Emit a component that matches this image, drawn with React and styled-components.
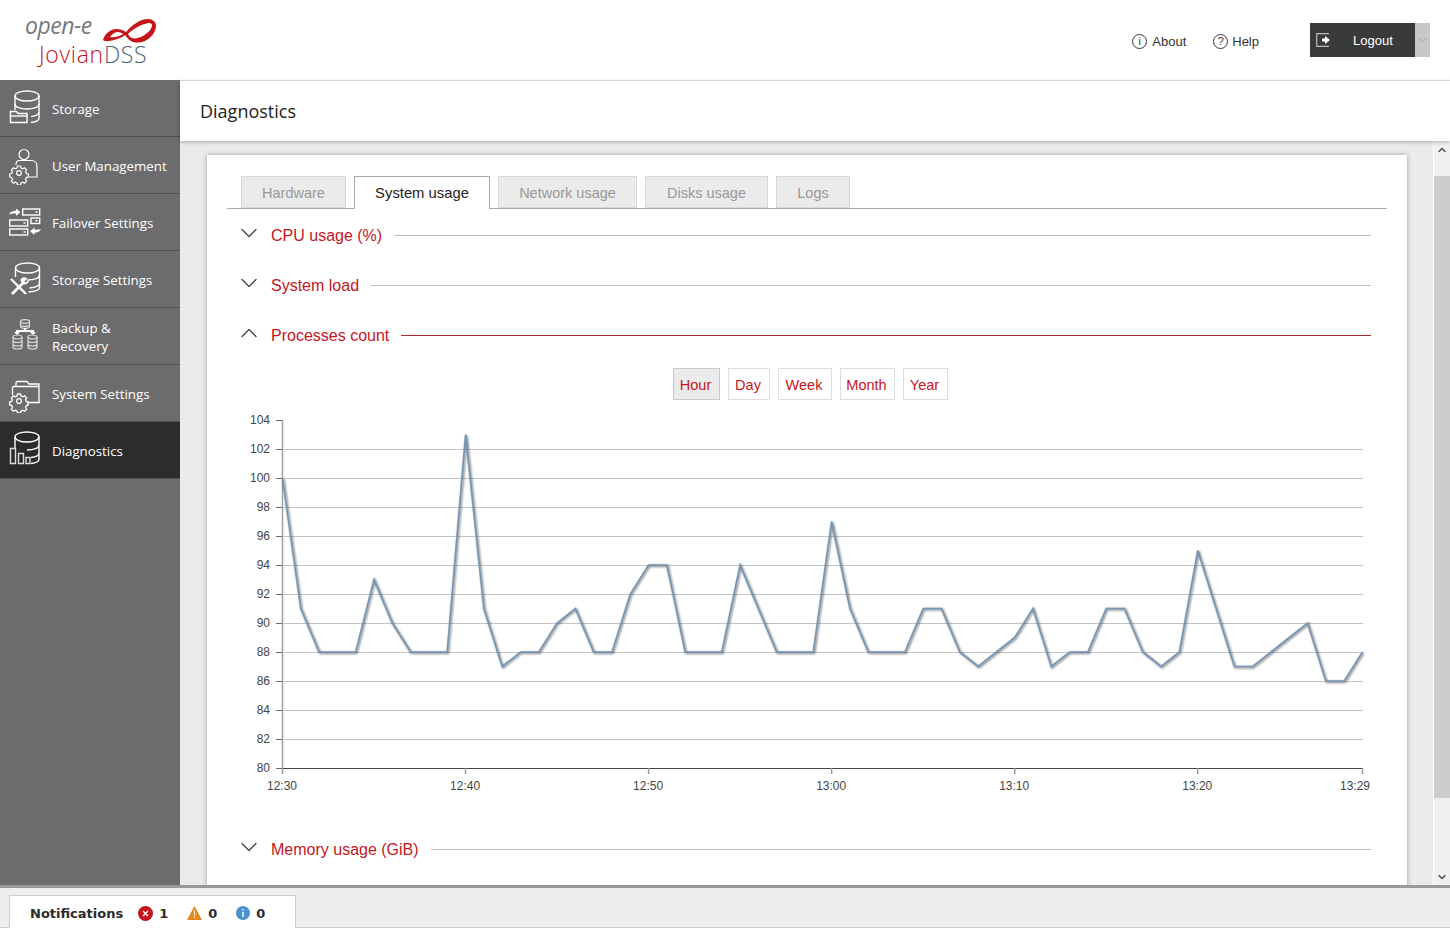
import React from "react";
import styled, { createGlobalStyle } from "styled-components";
import { ChevronDown, ChevronUp } from "lucide-react";

const GlobalStyle = createGlobalStyle`
    * { box-sizing: border-box; }
    html, body { margin: 0; padding: 0; background: #fff; }
    body { font-family: "Liberation Sans", Arial, sans-serif; }
`;

const StorageIcon = () => (
    <svg width="40" height="40" viewBox="0 0 40 40" fill="none" stroke="#fff" strokeWidth="1.400">
        <ellipse cx="21" cy="8" rx="12" ry="5" />
        <path d="M9 8v8c0 3 5 5 12 5s12-2 12-5V8" />
        <path d="M33 16v8c0 2.500-3 4-8 4.600" />
        <path d="M33 24v6c0 2.500-3 4-8 4.500" />
        <path d="M9 16v6" />
        <path d="M4.500 34.500V23.500h6l1.500 2h9v9z" fill="#6c6c6e" />
        <path d="M3.500 28h18" />
    </svg>
);

const GearShape = ({ x, y }) => (
    <g transform={`translate(${x} ${y})`}>
        <circle r="2.400" />
        <path d="M-1.500-7h3l.5 2 1.700.8 1.900-1 2 2.100-1 1.800.7 1.800 2 .5v3l-2 .5-.7 1.800 1 1.800-2 2.100-1.900-1-1.700.8-.5 2h-3l-.5-2-1.700-.8-1.900 1-2-2.100 1-1.800-.7-1.800-2-.5v-3l2-.5.7-1.800-1-1.800 2-2.100 1.900 1 1.700-.8z" />
    </g>
);

const UserIcon = () => (
    <svg width="40" height="40" viewBox="0 0 40 40" fill="none" stroke="#fff" strokeWidth="1.200">
        <circle cx="18" cy="9.500" r="5" />
        <path d="M10 20c0-2.500 1-4.500 3.500-4.500h12c3.500 0 5.500 2.500 5.500 5.500v11h-9" />
        <GearShape x={13} y={28} />
    </svg>
);

const FailoverIcon = () => (
    <svg width="40" height="40" viewBox="0 0 40 40" fill="none" stroke="#fff" strokeWidth="1.400">
        <rect x="16.700" y="7" width="17" height="6" />
        <rect x="25" y="16" width="8.700" height="5.500" />
        <rect x="3.700" y="18" width="18" height="6" />
        <rect x="3.700" y="27" width="18" height="6" />
        <path d="M29.500 10h2M29.500 18.700h2M17.500 21h2M17.500 30h2" strokeWidth="1.600" />
        <path d="M3 12.500c1-2.500 3.500-3.700 7-3.700V6.500l4.500 3.800-4.500 3.500v-2.300c-3 0-5 .2-7 1z" fill="#fff" stroke="none" />
        <path d="M35 27c-1 2.500-3.500 3.700-6.500 3.700v2.300L24 29.200l4.500-3.700v2.300c3 0 5-.2 6.500-.8z" fill="#fff" stroke="none" />
    </svg>
);

const StorageSettingsIcon = () => (
    <svg width="40" height="40" viewBox="0 0 40 40" fill="none" stroke="#fff" strokeWidth="1.400">
        <ellipse cx="21.500" cy="9" rx="12" ry="5" />
        <path d="M9.500 9v9M33.500 9v7c0 3-5 5-12 5" />
        <path d="M33.500 16v8c0 2.500-4 4.500-10 5" />
        <path d="M33.500 24v4.500c0 2.500-4 4-11 4.500" />
        <path d="M5 20l15 15M19 22L6 35" stroke="#6c6c6e" strokeWidth="6" />
        <path d="M5 20l15 15" strokeWidth="2.400" />
        <path d="M18 23L6 35" strokeWidth="2.800" />
        <path d="M21 19.500l-3 3 1.500 1.500 3-2.500c0 2-2 4-4.500 3.500l-3-3c-.5-2.500 2-4.500 6-2.500z" fill="#fff" strokeWidth="1" />
    </svg>
);

const SmallDb = ({ x, y }) => (
    <g transform={`translate(${x} ${y})`}>
        <ellipse cx="4.500" cy="2" rx="4.500" ry="2" />
        <path d="M0 2v10c0 1.200 2 2 4.500 2s4.500-.8 4.500-2V2M0 5.500c0 1.200 2 2 4.500 2s4.500-.8 4.500-2M0 9c0 1.200 2 2 4.500 2s4.500-.8 4.500-2" />
    </g>
);

const BackupIcon = () => (
    <svg width="40" height="40" viewBox="0 0 40 40" fill="none" stroke="#ddd" strokeWidth="1.200">
        <ellipse cx="19" cy="5.500" rx="4.500" ry="1.800" />
        <path d="M14.500 5.500v5c0 1 2 1.800 4.500 1.800s4.500-.8 4.500-1.800v-5M14.500 8.500c0 1 2 1.800 4.500 1.800s4.500-.8 4.500-1.800" />
        <path d="M11 18v-3h16v3M19 12v3" strokeWidth="2.200" stroke="#fff" />
        <path d="M8 16h6l-3 3zM24 16h6l-3 3z" fill="#fff" stroke="none" />
        <SmallDb x={7} y={19} />
        <SmallDb x={22} y={19} />
    </svg>
);

const SystemIcon = () => (
    <svg width="40" height="40" viewBox="0 0 40 40" fill="none" stroke="#fff" strokeWidth="1.300">
        <path d="M6.500 22V15c0-1 .5-1.500 1.500-1.500h25" />
        <path d="M10 13V10c0-1 .5-1.500 1.500-1.500h9.500l2 2.500h10v18.500" />
        <path d="M21 29.500h13" strokeWidth="1.600" />
        <GearShape x={13} y={28} />
    </svg>
);

const DiagnosticsIcon = () => (
    <svg width="40" height="40" viewBox="0 0 40 40" fill="none" stroke="#fff" strokeWidth="1.400">
        <ellipse cx="21" cy="7" rx="12" ry="5" />
        <path d="M9 7v11M33 7v8c0 3-5 5-12 5M33 15v8c0 2.500-3 4-8 4.500M33 23v6c0 2.500-3 4-8 4.500" />
        <path d="M4.500 18.500h5v15h-5zM12.500 23.500h5v10h-5zM20 27.500h4v6h-4z" stroke="#ddd" fill="#2c2c2c" />
    </svg>
);

const menuItems = [
    { label: "Storage", Icon: StorageIcon },
    { label: "User Management", Icon: UserIcon },
    { label: "Failover Settings", Icon: FailoverIcon },
    { label: "Storage Settings", Icon: StorageSettingsIcon },
    { label: "Backup & Recovery", Icon: BackupIcon, narrow: true },
    { label: "System Settings", Icon: SystemIcon },
    { label: "Diagnostics", Icon: DiagnosticsIcon, active: true },
];

const tabs = [
    { label: "Hardware", width: 105 },
    { label: "System usage", width: 136, active: true },
    { label: "Network usage", width: 139 },
    { label: "Disks usage", width: 123 },
    { label: "Logs", width: 74 },
];

const ranges = [
    { label: "Hour", width: 47, active: true },
    { label: "Day", width: 42 },
    { label: "Week", width: 54 },
    { label: "Month", width: 55 },
    { label: "Year", width: 45 },
];

const samples = [
    100, 91, 88, 88, 88, 93, 90, 88, 88, 88, 103, 91, 87, 88, 88, 90, 91, 88, 88, 92,
    94, 94, 88, 88, 88, 94, 91, 88, 88, 88, 97, 91, 88, 88, 88, 91, 91, 88, 87, 88,
    89, 91, 87, 88, 88, 91, 91, 88, 87, 88, 95, 91, 87, 87, 88, 89, 90, 86, 86, 88,
];

const CHART_LEFT = 43;
const MIN_STEP = 18.305;
const PX_PER_UNIT = 14.5;
const CHART_BOTTOM = 358;

const xOf = (minute) => CHART_LEFT + minute * MIN_STEP;
const yOf = (value) => CHART_BOTTOM - (value - 80) * PX_PER_UNIT;

const yTicks = [80, 82, 84, 86, 88, 90, 92, 94, 96, 98, 100, 102, 104];
const xTicks = [
    { minute: 0, label: "12:30" },
    { minute: 10, label: "12:40" },
    { minute: 20, label: "12:50" },
    { minute: 30, label: "13:00" },
    { minute: 40, label: "13:10" },
    { minute: 50, label: "13:20" },
    { minute: 59, label: "13:29" },
];

const ProcessChart = () => {
    const line = samples.map((v, i) => `${(xOf(i) - 0.5).toFixed(1)},${yOf(v).toFixed(1)}`).join(" ");
    return (
        <svg width="1160" height="390" viewBox="0 0 1160 390" style={{ display: "block" }}>
            <defs>
                <filter id="lineShadow" x="-5%" y="-5%" width="110%" height="110%">
                    <feGaussianBlur stdDeviation="0.9" />
                </filter>
            </defs>
            {yTicks.map((t) => (
                <g key={t}>
                    <line x1={CHART_LEFT - 7} x2={CHART_LEFT} y1={yOf(t) + 0.5} y2={yOf(t) + 0.5} stroke="#666" />
                    {t !== 80 && t !== 104 && (
                        <line x1={CHART_LEFT} x2={xOf(59)} y1={yOf(t) + 0.5} y2={yOf(t) + 0.5} stroke="#c4c4c4" />
                    )}
                    <text x={CHART_LEFT - 13} y={yOf(t) + 3.5} textAnchor="end" fontSize="12" fill="#444" fontFamily="Liberation Sans">{t}</text>
                </g>
            ))}
            <line x1={CHART_LEFT - 0.5} x2={CHART_LEFT - 0.5} y1={yOf(104)} y2={CHART_BOTTOM} stroke="#a0a0a0" strokeWidth="1.500" />
            <line x1={CHART_LEFT} x2={xOf(59)} y1={CHART_BOTTOM + 0.5} y2={CHART_BOTTOM + 0.5} stroke="#444" />
            {xTicks.map(({ minute, label }) => (
                <g key={label}>
                    <line x1={xOf(minute) - 0.5} x2={xOf(minute) - 0.5} y1={CHART_BOTTOM} y2={CHART_BOTTOM + 6} stroke="#999" strokeWidth="1.500" />
                    <text x={minute === 59 ? xOf(minute) - 8 : xOf(minute) - 1} y={CHART_BOTTOM + 22} textAnchor="middle" fontSize="12" fill="#444" fontFamily="Liberation Sans">{label}</text>
                </g>
            ))}
            <polyline points={line} fill="none" stroke="#000" strokeOpacity="0.5" strokeWidth="2" transform="translate(1 1)" filter="url(#lineShadow)" />
            <polyline points={line} fill="none" stroke="#7396b6" strokeWidth="1.600" />
        </svg>
    );
};

const SectionRow = ({ title, open }) => (
    <Section>
        <Chevron>{open ? <ChevronUp size={28} strokeWidth={1.100} /> : <ChevronDown size={28} strokeWidth={1.100} />}</Chevron>
        <SectionTitle>{title}</SectionTitle>
        <SectionLine $open={open} />
    </Section>
);

export default function App() {
    return (
        <Page>
            <GlobalStyle />
            <Header>
                <Logo>
                    <LogoTop>
                        <OpenE>open-e</OpenE>
                        <svg width="55" height="26" viewBox="0 0 55 26">
                            <path
                                fillRule="evenodd"
                                fill="#c4161c"
                                d="M1 22C3 15 9 11 14 11c4 0 7 1 10 3C30 7 38 1 46 1c5 0 8 3 8 7 0 6-5 12-11 15-5 2-10 2-14 0-2-1-4-3-6-6-2 2-7 4-11 5-4 1-9 2-11 0zM8 19c2-3 5-5 8-5 2 0 4 1 5 2-3 2-9 4-13 3zM26 16c6-6 14-10 21-11 2 0 3 1 3 2 0 4-4 8-9 11-4 2-8 3-11 2-2-1-3-2-4-4z"
                            />
                        </svg>
                    </LogoTop>
                    <LogoName>Jovian<span>DSS</span></LogoName>
                </Logo>
                <HeaderActions>
                    <HelpLink $gap={5}>
                        <Round>i</Round>About
                    </HelpLink>
                    <HelpLink $gap={4}>
                        <Round>?</Round>Help
                    </HelpLink>
                    <LogoutGroup>
                        <LogoutButton>
                            <svg width="16" height="14" viewBox="0 0 16 14" fill="none">
                                <path d="M13 .7H.7v12.600H13" stroke="#bbb" strokeWidth="1.200" />
                                <path d="M6 5.500h3V3l5 4-5 4V8.500H6z" fill="#fff" />
                            </svg>
                            <LogoutLabel>Logout</LogoutLabel>
                        </LogoutButton>
                        <LogoutCaret><ChevronDown size={16} strokeWidth={1} /></LogoutCaret>
                    </LogoutGroup>
                </HeaderActions>
            </Header>
            <Body>
                <Sidebar>
                    {menuItems.map(({ label, Icon, active, narrow }) => (
                        <MenuItem key={label} $active={active}>
                            <Icon />
                            <MenuLabel $narrow={narrow}>{label}</MenuLabel>
                        </MenuItem>
                    ))}
                </Sidebar>
                <Main>
                    <TitleBar>Diagnostics</TitleBar>
                    <Workspace>
                        <ScrollArea>
                            <Card>
                                <TabStrip>
                                    {tabs.map((t) => (
                                        <Tab key={t.label} $active={t.active} $width={t.width}>{t.label}</Tab>
                                    ))}
                                </TabStrip>
                                <Sections>
                                    <SectionRow title="CPU usage (%)" />
                                    <SectionRow title="System load" />
                                    <SectionRow title="Processes count" open />
                                    <Ranges>
                                        {ranges.map((r) => (
                                            <RangeButton key={r.label} $active={r.active} $width={r.width}>{r.label}</RangeButton>
                                        ))}
                                    </Ranges>
                                    <ChartWrap><ProcessChart /></ChartWrap>
                                    <SectionRow title="Memory usage (GiB)" />
                                </Sections>
                            </Card>
                        </ScrollArea>
                        <Scrollbar>
                            <ScrollArrow><ChevronUp size={12} strokeWidth={3} /></ScrollArrow>
                            <ScrollThumb />
                            <ScrollRest />
                            <ScrollArrow><ChevronDown size={12} strokeWidth={3} /></ScrollArrow>
                        </Scrollbar>
                    </Workspace>
                </Main>
            </Body>
            <Footer>
                <NotifyTab>
                    <NotifyTitle>Notifications</NotifyTitle>
                    <NotifyItem>
                        <svg width="15" height="15" viewBox="0 0 15 15">
                            <circle cx="7.500" cy="7.500" r="7.500" fill="#c4161c" />
                            <path d="M5 5l5 5M10 5l-5 5" stroke="#fff" strokeWidth="1.300" />
                        </svg>
                        1
                    </NotifyItem>
                    <NotifyItem>
                        <svg width="15" height="14" viewBox="0 0 15 14">
                            <path d="M7.500 0L15 14H0z" fill="#e28a1a" />
                            <path d="M7.500 4.500v5M7.500 10.500v1.500" stroke="#fff" strokeWidth="1.200" />
                        </svg>
                        0
                    </NotifyItem>
                    <NotifyItem>
                        <svg width="14" height="14" viewBox="0 0 14 14">
                            <circle cx="7" cy="7" r="7" fill="#4a90d0" />
                            <path d="M7 3v1.500M7 6v5" stroke="#fff" strokeWidth="1.500" />
                        </svg>
                        0
                    </NotifyItem>
                </NotifyTab>
            </Footer>
        </Page>
    );
}

const Page = styled.div`
    width: 1450px;
    height: 933px;
    display: flex;
    flex-direction: column;
    overflow: hidden;
`;

const Header = styled.header`
    height: 81px;
    flex: none;
    display: flex;
    justify-content: space-between;
    padding-right: 20px;
    background: #fff;
    border-bottom: 1px solid #e2e2e2;
`;

const Logo = styled.div`
    width: 180px;
    height: 80px;
    padding: 10px 0 0 25px;
    background: #fff;
`;

const LogoTop = styled.div`
    display: flex;
    align-items: flex-start;
    gap: 10px;
    height: 33px;
    svg { margin-top: 8px; }
`;

const OpenE = styled.span`
    font-family: "Open Sans", sans-serif;
    font-style: italic;
    font-size: 23px;
    line-height: 30px;
    letter-spacing: -0.5px;
    color: #77787b;
`;

const LogoName = styled.div`
    font-family: "Open Sans", sans-serif;
    font-weight: 300;
    font-size: 23px;
    line-height: 22px;
    padding-left: 14px;
    letter-spacing: 0.7px;
    color: #c4161c;
    span { color: #4f6272; }
`;

const HeaderActions = styled.div`
    display: flex;
    align-items: flex-start;
    padding-top: 23px;
`;

const HelpLink = styled.a`
    display: flex;
    align-items: center;
    gap: ${({ $gap }) => $gap}px;
    height: 36px;
    margin-right: 27px;
    font-size: 13px;
    color: #333;
    &:nth-child(2) { margin-right: 51px; }
`;

const Round = styled.span`
    width: 15px;
    height: 15px;
    border: 1px solid #333;
    border-radius: 50%;
    display: flex;
    align-items: center;
    justify-content: center;
    font-size: 11px;
`;

const LogoutGroup = styled.div`
    display: flex;
    height: 34px;
`;

const LogoutButton = styled.div`
    width: 105px;
    display: flex;
    align-items: center;
    padding-left: 6px;
    background: #3a3a3a;
    color: #fff;
    font-size: 13px;
`;

const LogoutLabel = styled.span`
    margin-left: 21px;
    padding-top: 1px;
`;

const LogoutCaret = styled.div`
    width: 15px;
    display: flex;
    align-items: center;
    justify-content: center;
    background: #c8c8c8;
    color: #888;
`;

const Body = styled.div`
    flex: none;
    height: 805px;
    display: flex;
    margin-top: -1px;
`;

const Sidebar = styled.nav`
    width: 180px;
    flex: none;
    background: #6c6c6e;
`;

const MenuItem = styled.div`
    height: 57px;
    display: flex;
    align-items: center;
    gap: 6px;
    padding-left: 6px;
    border-bottom: 1px solid #515153;
    background: ${({ $active }) => ($active ? "#2c2c2c" : "#6c6c6e")};
    color: #fff;
    svg { flex: none; }
`;

const MenuLabel = styled.span`
    padding-top: 2px;
    font-family: "Open Sans", sans-serif;
    font-size: 13.300px;
    line-height: 18px;
    width: ${({ $narrow }) => ($narrow ? "80px" : "auto")};
`;

const Main = styled.main`
    flex: 1;
    min-width: 0;
    display: flex;
    flex-direction: column;
    margin-top: 1px;
`;

const TitleBar = styled.div`
    height: 60px;
    flex: none;
    display: flex;
    align-items: center;
    padding-left: 20px;
    font-family: "Open Sans", sans-serif;
    font-weight: 500;
    font-size: 18px;
    color: #222;
    background: #fff;
    box-shadow: 0 1px 4px rgba(0, 0, 0, 0.3);
    z-index: 1;
`;

const Workspace = styled.div`
    flex: 1;
    min-height: 0;
    display: flex;
    background: #ebebeb;
`;

const ScrollArea = styled.div`
    flex: 1;
    overflow: hidden;
    padding: 14px 26px 0 27px;
`;

const Card = styled.div`
    height: 760px;
    padding: 21px 20px 0;
    background: #fff;
    box-shadow: 0 0 5px rgba(0, 0, 0, 0.35);
`;

const TabStrip = styled.div`
    height: 33px;
    display: flex;
    gap: 8px;
    padding-left: 14px;
    border-bottom: 1px solid #aaa;
`;

const Tab = styled.div`
    width: ${({ $width }) => $width}px;
    height: ${({ $active }) => ($active ? "33px" : "32px")};
    display: flex;
    align-items: center;
    justify-content: center;
    padding-top: ${({ $active }) => ($active ? "0" : "2px")};
    font-size: ${({ $active }) => ($active ? "14.800px" : "14.500px")};
    color: ${({ $active }) => ($active ? "#222" : "#999")};
    background: ${({ $active }) => ($active ? "#fff" : "#ebebeb")};
    border: 1px solid ${({ $active }) => ($active ? "#aaa" : "#d8d8d8")};
    border-bottom: ${({ $active }) => ($active ? "none" : "1px solid #d8d8d8")};
`;

const Sections = styled.div`
    padding: 1px 16px 0 15px;
`;

const Section = styled.div`
    height: 50px;
    display: flex;
    align-items: center;
`;

const Chevron = styled.span`
    width: 36px;
    flex: none;
    display: flex;
    margin: 0 0 4px -7px;
    color: #444;
`;

const SectionTitle = styled.span`
    padding-top: 2px;
    font-size: 16px;
    color: #c4161c;
    margin-right: 12px;
    white-space: nowrap;
`;

const SectionLine = styled.span`
    flex: 1;
    height: 1px;
    background: ${({ $open }) => ($open ? "#b02a2a" : "#bdbdbd")};
`;

const Ranges = styled.div`
    display: flex;
    justify-content: center;
    gap: 8px;
    padding-top: 8px;
    margin-left: 8px;
`;

const RangeButton = styled.div`
    width: ${({ $width }) => $width}px;
    height: 32px;
    display: flex;
    align-items: center;
    justify-content: center;
    padding: 2px 2px 0 0;
    font-size: 14.500px;
    color: #c4161c;
    background: ${({ $active }) => ($active ? "#ebebeb" : "#fff")};
    border: 1px solid ${({ $active }) => ($active ? "#c8c8c8" : "#dedede")};
`;

const ChartWrap = styled.div`
    height: 424px;
    margin-left: -2px;
    padding-top: 10px;
`;

const Scrollbar = styled.div`
    width: 17px;
    flex: none;
    display: flex;
    flex-direction: column;
    background: #f0f0f0;
    border-left: 1px solid #fff;
`;

const ScrollArrow = styled.div`
    height: 17px;
    flex: none;
    display: flex;
    align-items: center;
    justify-content: center;
    color: #555;
`;

const ScrollThumb = styled.div`
    height: 622px;
    flex: none;
    margin-top: 18px;
    background: #cdcdcd;
`;

const ScrollRest = styled.div`
    flex: 1;
`;

const Footer = styled.footer`
    height: 43px;
    flex: none;
    padding: 7px 0 0 9px;
    background: #eee;
    border-top: 3px solid #999;
    border-bottom: 1px solid #ccc;
    margin-bottom: 5px;
`;

const NotifyTab = styled.div`
    width: 287px;
    height: 33px;
    display: flex;
    align-items: center;
    padding: 2px 0 0 20px;
    background: #fff;
    border: 1px solid #ccc;
    border-bottom: none;
`;

const NotifyTitle = styled.span`
    font-family: "DejaVu Sans", sans-serif;
    font-weight: 700;
    font-size: 13px;
    color: #2b2b2b;
    margin-right: 15px;
`;

const NotifyItem = styled.span`
    display: flex;
    align-items: center;
    gap: 6px;
    margin-right: 19px;
    font-family: "DejaVu Sans", sans-serif;
    font-weight: 700;
    font-size: 13px;
    color: #2b2b2b;
`;
